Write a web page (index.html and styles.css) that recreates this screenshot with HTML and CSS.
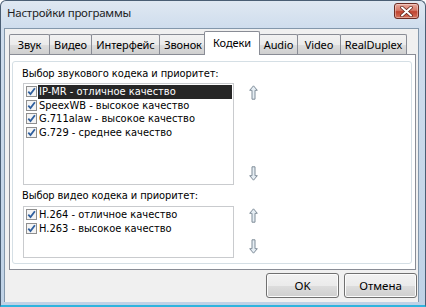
FILE: index.html
```html
<!DOCTYPE html>
<html>
<head>
<meta charset="utf-8">
<link rel="stylesheet" href="styles.css">
</head>
<body>
<div class="window">
  <div class="titlebar">
    <span class="title">Настройки программы</span>
    <button class="close" aria-label="Закрыть">
      <svg width="13" height="11" viewBox="0 0 13 11"><path d="M2 1.5 L11 9.5 M11 1.5 L2 9.5" stroke="#5a2018" stroke-width="3.4" stroke-linecap="round"/><path d="M2 1.5 L11 9.5 M11 1.5 L2 9.5" stroke="#ffffff" stroke-width="2" stroke-linecap="round"/></svg>
    </button>
  </div>
  <div class="client">
    <div class="tabs">
      <div class="tab t-zvuk">Звук</div>
      <div class="tab t-video">Видео</div>
      <div class="tab t-iface">Интерфейс</div>
      <div class="tab t-call">Звонок</div>
      <div class="tab t-codec active">Кодеки</div>
      <div class="tab t-audio-en">Audio</div>
      <div class="tab t-video-en">Video</div>
      <div class="tab t-rd">RealDuplex</div>
    </div>
    <div class="panel">
      <div class="group">
        <div class="label">Выбор звукового кодека и приоритет:</div>
        <div class="row audio">
          <div class="listbox">
            <div class="item selected"><span class="cb"></span><span class="txt">IP-MR - отличное качество</span></div>
            <div class="item"><span class="cb"></span><span class="txt">SpeexWB - высокое качество</span></div>
            <div class="item"><span class="cb"></span><span class="txt">G.711alaw - высокое качество</span></div>
            <div class="item"><span class="cb"></span><span class="txt">G.729 - среднее качество</span></div>
          </div>
          <div class="arrows">
            <svg class="arrow" width="9" height="15" viewBox="0 0 9 15"><path d="M4.5 0.8 L8.3 5.3 L6 5.3 L6 14.2 L3 14.2 L3 5.3 L0.7 5.3 Z" fill="#e6eef4" stroke="#7f8c98" stroke-width="1"/></svg>
            <svg class="arrow" width="9" height="15" viewBox="0 0 9 15"><path d="M4.5 14.2 L8.3 9.7 L6 9.7 L6 0.8 L3 0.8 L3 9.7 L0.7 9.7 Z" fill="#e6eef4" stroke="#7f8c98" stroke-width="1"/></svg>
          </div>
        </div>
        <div class="label video-label">Выбор видео кодека и приоритет:</div>
        <div class="row video">
          <div class="listbox">
            <div class="item"><span class="cb"></span><span class="txt">H.264 - отличное качество</span></div>
            <div class="item"><span class="cb"></span><span class="txt">H.263 - высокое качество</span></div>
          </div>
          <div class="arrows">
            <svg class="arrow" width="9" height="15" viewBox="0 0 9 15"><path d="M4.5 0.8 L8.3 5.3 L6 5.3 L6 14.2 L3 14.2 L3 5.3 L0.7 5.3 Z" fill="#e6eef4" stroke="#7f8c98" stroke-width="1"/></svg>
            <svg class="arrow" width="9" height="15" viewBox="0 0 9 15"><path d="M4.5 14.2 L8.3 9.7 L6 9.7 L6 0.8 L3 0.8 L3 9.7 L0.7 9.7 Z" fill="#e6eef4" stroke="#7f8c98" stroke-width="1"/></svg>
          </div>
        </div>
      </div>
    </div>
    <div class="buttons">
      <button class="btn">OK</button>
      <button class="btn">Отмена</button>
    </div>
  </div>
</div>
</body>
</html>
```
FILE: styles.css
```css
html, body {
  margin: 0;
  padding: 0;
  width: 426px;
  height: 307px;
  overflow: hidden;
  background: #ffffff;
}

.window {
  box-sizing: border-box;
  width: 426px;
  height: 307px;
  border: 1px solid #4a5e74;
  border-radius: 6px 6px 0 0;
  background: linear-gradient(to bottom, #dfe8f2 0px, #cfdded 27px, #bfd2e6 100%);
  display: flex;
  flex-direction: column;
  padding: 0 6px 3px 3px;
  border-bottom: 2px solid #2fb4de;
}

.titlebar {
  height: 27px;
  display: flex;
  align-items: center;
  justify-content: space-between;
  padding: 0 0 2px 3px;
  box-sizing: border-box;
}

.title {
  font-family: "Noto Sans", "Open Sans", sans-serif;
  font-size: 11.5px;
  letter-spacing: -0.25px;
  color: #1e1e1e;
  position: relative;
  top: -1px;
}

.close {
  width: 25px;
  height: 16px;
  margin-top: -5px;
  margin-right: 0;
  border: 1px solid #6b2c24;
  border-radius: 3px;
  background: linear-gradient(to bottom, #e9a99c 0%, #d67a6a 45%, #c0432f 55%, #d5735e 100%);
  padding: 0;
  display: flex;
  align-items: center;
  justify-content: center;
  box-shadow: inset 0 0 0 1px rgba(255,255,255,0.35);
}

.client {
  flex: 1;
  background: #f0f0f0;
  border: 1px solid #8397ab;
  border-bottom: none;
  display: flex;
  flex-direction: column;
  padding: 2px 1px 0 4px;
}

.tabs {
  display: flex;
  align-items: flex-end;
  height: 23px;
  position: relative;
  z-index: 1;
}

.tab {
  font-family: "Noto Sans", "Open Sans", sans-serif;
  font-size: 11px;
  letter-spacing: -0.1px;
  color: #000;
  height: 20px;
  line-height: 19px;
  box-sizing: border-box;
  text-align: center;
  padding: 0;
  border: 1px solid #898c95;
  border-bottom: none;
  border-radius: 2px 2px 0 0;
  background: linear-gradient(to bottom, #f2f2f2 0%, #ebebeb 50%, #dddddd 51%, #cfcfcf 100%);
  margin-right: -1px;
  white-space: nowrap;
}

.t-zvuk { width: 41px; }
.t-video { width: 43px; }
.t-iface { width: 69px; }
.t-call { width: 48px; }
.t-audio-en { width: 39px; }
.t-video-en { width: 44px; }
.t-rd { width: 67px; }

.tab.active {
  width: 56px;
  height: 24px;
  line-height: 22px;
  background: #ffffff;
  margin: 0 -1px 0 -2px;
  position: relative;
  top: 1px;
  z-index: 2;
}

.panel {
  background: #ffffff;
  border: 1px solid #898c95;
  height: 216px;
  box-sizing: border-box;
  margin-right: 1px;
  padding: 6px 3px 5px 2px;
}

.group {
  height: 100%;
  box-sizing: border-box;
  border: 1px solid #d5dfe5;
  border-radius: 3px;
  padding: 5px 0 0 9px;
  display: flex;
  flex-direction: column;
}

.label {
  font-family: "DejaVu Sans Condensed", "DejaVu Sans", sans-serif;
  font-stretch: condensed;
  font-size: 11px;
  letter-spacing: -0.1px;
  color: #000;
  line-height: 13px;
  height: 16px;
}

.video-label {
  margin-top: 4px;
  height: 17px;
}

.row {
  display: flex;
}

.listbox {
  box-sizing: border-box;
  width: 211px;
  margin-left: 1px;
  border: 1px solid #c9cbce;
  background: #fff;
  padding: 1px 1px 0 1px;
}

.audio .listbox {
  height: 102px;
}

.video .listbox {
  height: 52px;
}

.item {
  display: flex;
  align-items: center;
  height: 13.5px;
  font-family: "DejaVu Sans Condensed", "DejaVu Sans", sans-serif;
  font-stretch: condensed;
  font-size: 11px;
  color: #000;
}

.cb {
  width: 9px;
  height: 9px;
  margin: 0 1px 0 1px;
  flex: none;
  border: 1px solid #8f8f8f;
  background-color: #f4f4f4;
  background-image: url("data:image/svg+xml;utf8,<svg xmlns='http://www.w3.org/2000/svg' width='9' height='9' viewBox='0 0 9 9'><path d='M1.3 4.6 L3.5 7 L7.9 1.2' fill='none' stroke='%232f5f9e' stroke-width='1.8'/></svg>");
}

.txt {
  flex: 1;
  height: 100%;
  display: flex;
  align-items: center;
  padding-left: 1px;
  white-space: nowrap;
}

.item.selected .txt {
  background: #262626;
  color: #ffffff;
}

.arrows {
  display: flex;
  flex-direction: column;
  justify-content: space-between;
  margin-left: 15px;
  padding: 2px 0 4px;
}

.buttons {
  display: flex;
  justify-content: flex-end;
  gap: 5px;
  padding: 3px 0 0 0;
}

.btn {
  width: 73px;
  height: 25px;
  font-family: "Noto Sans", "Open Sans", sans-serif;
  font-size: 11.5px;
  color: #000;
  border: 1px solid #707070;
  border-radius: 3px;
  background: linear-gradient(to bottom, #f2f2f2 0%, #ebebeb 50%, #dddddd 51%, #cfcfcf 100%);
  box-shadow: inset 0 0 0 1px #fcfcfc;
  padding: 0;
}
```
